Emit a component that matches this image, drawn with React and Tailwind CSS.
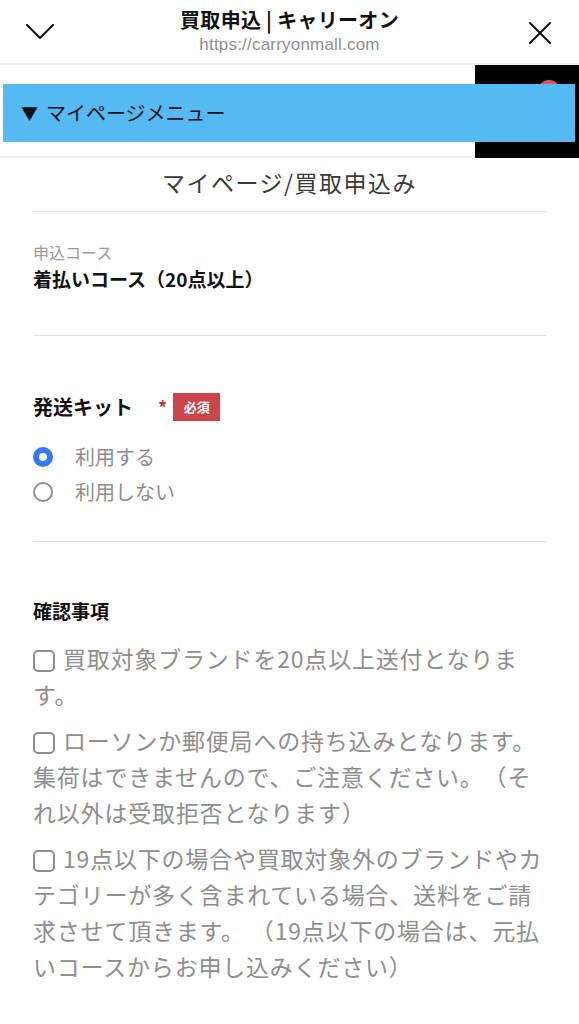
import React from "react";

const JP = { fontFamily: '"Noto Sans CJK JP", "Noto Sans", sans-serif' };

function Checkbox() {
  return (
    <span className="inline-block w-[22px] h-[22px] rounded-[5px] border-2 border-[#8e8e8e] align-[-4px] mr-[8px]" />
  );
}

export default function App() {
  return (
    <div className="w-[579px] h-[1024px] bg-white overflow-hidden" style={JP}>
      {/* Browser header */}
      <div className="relative h-[65px] border-b-2 border-[#ededed] bg-white">
        <div className="absolute left-[25px] top-[22px]">
          <svg width="30" height="18" viewBox="0 0 30 18" fill="none" stroke="#111" strokeWidth="2" strokeLinecap="round" strokeLinejoin="round">
            <path d="M2 3 L15 16 L28 3" />
          </svg>
        </div>
        <div className="absolute right-[27px] top-[21px]">
          <svg width="24" height="24" viewBox="0 0 24 24" fill="none" stroke="#111" strokeWidth="2" strokeLinecap="round">
            <path d="M2 2 L22 22 M22 2 L2 22" />
          </svg>
        </div>
        <div className="flex flex-col items-center pt-[6px]">
          <div className="text-[20px] leading-[28px] font-bold text-[#111] tracking-[0.3px]">買取申込 | キャリーオン</div>
          <div className="text-[17px] leading-[22px] text-[#8e8e8e] tracking-[0.2px]" style={{ fontFamily: '"Liberation Sans", Arial, sans-serif' }}>https://carryonmall.com</div>
        </div>
      </div>

      {/* Menu bar area */}
      <div className="relative h-[93px] pt-[19px] border-b-2 border-[#efefef]">
        <div className="absolute right-0 top-0 w-[104px] h-[93px] bg-black">
          <div className="absolute left-[63px] top-[15px] w-[22px] h-[22px] rounded-full bg-[#e0525a]" />
        </div>
        <div className="relative z-10 ml-[3px] mr-[4px] h-[58px] bg-[#55b9f4] flex items-center pl-[18px] text-[20px] text-[#111]">
          <span className="text-[17px] mr-[8px]">▼</span>
          <span>マイページメニュー</span>
        </div>
      </div>

      <div className="px-[33px]">
        {/* Page title */}
        <div className="pt-[9px] pb-[14px] border-b border-[#e2e2e2] text-center text-[23px] leading-[30px] tracking-[1.5px] text-[#3a3a3a]">
          マイページ/買取申込み
        </div>

        {/* Course */}
        <div className="pt-[28px] pb-[42px] border-b border-[#e2e2e2]">
          <div className="text-[16px] leading-[24px] text-[#9a9a9a]">申込コース</div>
          <div className="text-[19px] leading-[28px] font-bold text-[#111] mt-[1px]">着払いコース（20点以上）</div>
        </div>

        {/* Kit */}
        <div className="pt-[57px] pb-[32px] border-b border-[#e2e2e2]">
          <div className="flex items-center h-[28px]">
            <span className="text-[20px] font-bold text-[#111] leading-[28px]">発送キット</span>
            <span className="ml-[25px] text-[18px] font-bold text-[#c0393f] leading-[28px]">*</span>
            <span className="ml-[6px] h-[28px] w-[47px] bg-[#cd444b] text-white text-[13px] font-bold flex items-center justify-center">必須</span>
          </div>
          <div className="mt-[18px]">
            <div className="flex items-center h-[35px]">
              <span className="w-[20px] h-[20px] rounded-full border-[6px] border-[#3478f6] bg-white" />
              <span className="ml-[22px] text-[20px] text-[#8e8e8e]">利用する</span>
            </div>
            <div className="flex items-center h-[35px]">
              <span className="w-[20px] h-[20px] rounded-full border-2 border-[#8e8e8e] bg-white" />
              <span className="ml-[22px] text-[20px] text-[#8e8e8e]">利用しない</span>
            </div>
          </div>
        </div>

        {/* Confirmations */}
        <div className="pt-[57px]">
          <div className="text-[19px] leading-[24px] font-bold text-[#111]">確認事項</div>
          <div className="mt-[17px] text-[23px] leading-[36px] tracking-[0.8px] text-[#8e8e8e] flex flex-col gap-[10px] [text-spacing-trim:space-all]">
            <p>
              <Checkbox />買取対象ブランドを20点以上送付となりま<br />す。
            </p>
            <p>
              <Checkbox />ローソンか郵便局への持ち込みとなります。<br />集荷はできませんので、ご注意ください。（そ<br />れ以外は受取拒否となります）
            </p>
            <p>
              <Checkbox />19点以下の場合や買取対象外のブランドやカ<br />テゴリーが多く含まれている場合、送料をご請<br />求させて頂きます。 （19点以下の場合は、元払<br />いコースからお申し込みください）
            </p>
          </div>
        </div>
      </div>
    </div>
  );
}
